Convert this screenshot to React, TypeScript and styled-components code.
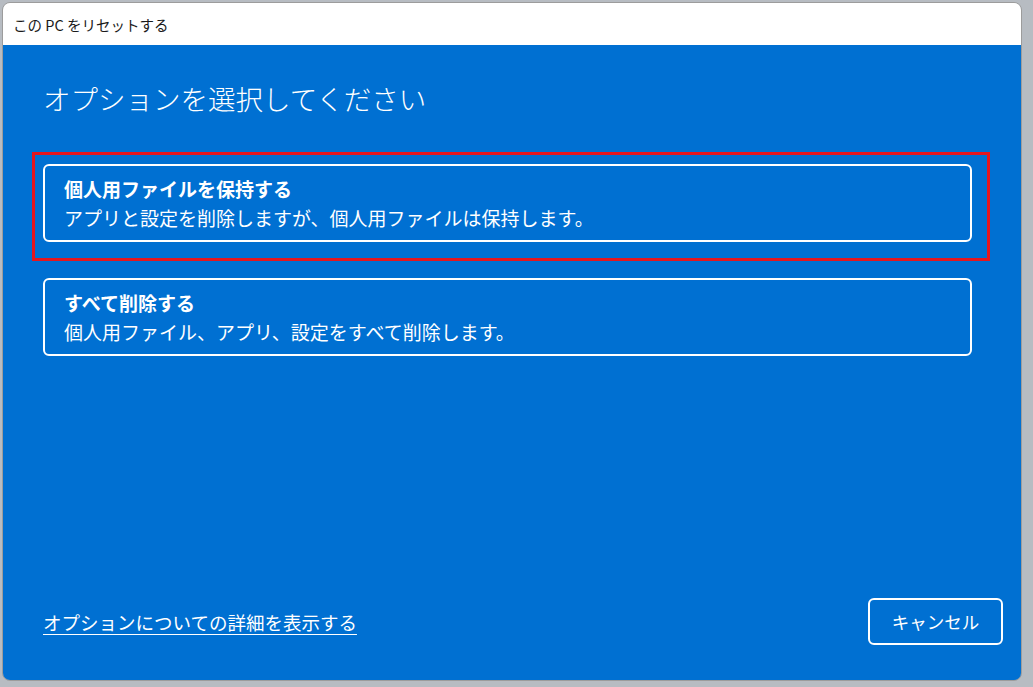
import React from 'react';
import styled, { createGlobalStyle } from 'styled-components';

const GlobalStyle = createGlobalStyle`
    html, body {
        margin: 0;
        padding: 0;
        background-color: #b7bcc2;
        font-family: "Noto Sans CJK JP", "Noto Sans", sans-serif;
    }
`;

const Page = styled.div`
    width: 1033px;
    height: 687px;
    padding: 2px 11px 6px 2px;
    box-sizing: border-box;
`;

const Window = styled.div`
    height: 100%;
    display: flex;
    flex-direction: column;
    border: 1px solid #9c9c9c;
    border-radius: 8px;
    overflow: hidden;
    box-sizing: border-box;
`;

const TitleBar = styled.div`
    height: 42px;
    flex-shrink: 0;
    background-color: #ffffff;
    display: flex;
    align-items: center;
    padding-left: 10px;
    font-size: 14.5px;
    color: #1a1a1a;
`;

const Panel = styled.main`
    flex: 1;
    background-color: #0070d2;
    color: #ffffff;
    display: flex;
    flex-direction: column;
`;

const Content = styled.section`
    flex: 1;
    padding: 33px 49px 0 40px;
`;

const Heading = styled.h1`
    margin: 0 0 46px 0;
    font-size: 27.5px;
    line-height: 40px;
    font-weight: 300;
`;

const OptionList = styled.div`
    display: flex;
    flex-direction: column;
    gap: 36px;
`;

const Highlight = styled.div`
    position: relative;
    &::after {
        content: '';
        position: absolute;
        top: -12px;
        left: -11px;
        right: -18px;
        bottom: -19px;
        border: 3px solid #e5161e;
        pointer-events: none;
    }
`;

const OptionCard = styled.button`
    display: block;
    width: 100%;
    text-align: left;
    background: transparent;
    color: #ffffff;
    border: 2px solid #ffffff;
    border-radius: 6px;
    padding: 8px 19px;
    font-family: inherit;
    cursor: pointer;
`;

const OptionTitle = styled.div`
    font-size: 19px;
    line-height: 29px;
    font-weight: 700;
`;

const OptionText = styled.div`
    font-size: 19px;
    line-height: 29px;
    font-weight: 400;
`;

const Footer = styled.footer`
    display: flex;
    justify-content: space-between;
    align-items: center;
    padding: 0 18px 35px 40px;
`;

const MoreLink = styled.a`
    color: #ffffff;
    font-size: 18.5px;
    text-decoration: underline;
    text-underline-offset: 4px;
    text-decoration-thickness: 1px;
    cursor: pointer;
`;

const CancelButton = styled.button`
    width: 135px;
    height: 47px;
    background: transparent;
    color: #ffffff;
    border: 2px solid #ffffff;
    border-radius: 6px;
    font-family: inherit;
    font-size: 17.5px;
    cursor: pointer;
`;

const options = [
    {
        title: '個人用ファイルを保持する',
        text: 'アプリと設定を削除しますが、個人用ファイルは保持します。',
        highlighted: true,
    },
    {
        title: 'すべて削除する',
        text: '個人用ファイル、アプリ、設定をすべて削除します。',
        highlighted: false,
    },
];

export default function App() {
    return (
        <>
            <GlobalStyle />
            <Page>
                <Window>
                    <TitleBar>この PC をリセットする</TitleBar>
                    <Panel>
                        <Content>
                            <Heading>オプションを選択してください</Heading>
                            <OptionList>
                                {options.map((o) => {
                                    const card = (
                                        <OptionCard key={o.title}>
                                            <OptionTitle>{o.title}</OptionTitle>
                                            <OptionText>{o.text}</OptionText>
                                        </OptionCard>
                                    );
                                    return o.highlighted ? <Highlight key={o.title}>{card}</Highlight> : card;
                                })}
                            </OptionList>
                        </Content>
                        <Footer>
                            <MoreLink>オプションについての詳細を表示する</MoreLink>
                            <CancelButton>キャンセル</CancelButton>
                        </Footer>
                    </Panel>
                </Window>
            </Page>
        </>
    );
}
